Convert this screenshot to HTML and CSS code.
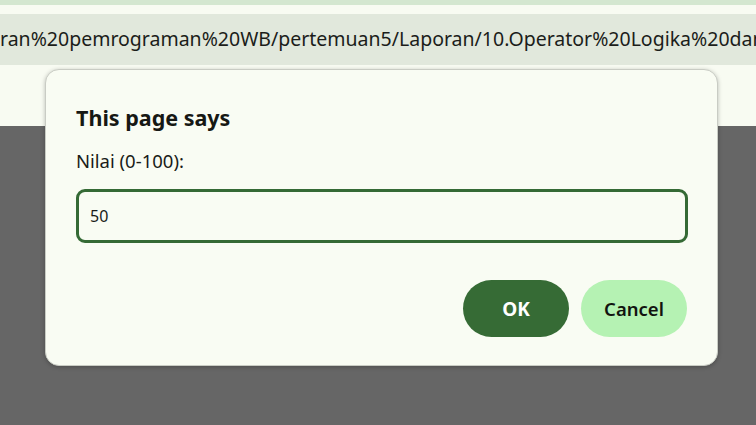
FILE: index.html
```html
<!DOCTYPE html>
<html>
<head>
<meta charset="utf-8">
<link rel="stylesheet" href="styles.css">
</head>
<body>
<div class="topband"></div>
<div class="tabstrip"></div>
<div class="addressbar">ran%20pemrograman%20WB/pertemuan5/Laporan/10.Operator%20Logika%20dan%20Percabangan/index.html</div>
<div class="toolbar"></div>
<div class="page"></div>
<div class="dialog">
  <h1 class="title">This page says</h1>
  <p class="label">Nilai (0-100):</p>
  <div class="input">50</div>
  <div class="actions">
    <div class="btn ok">OK</div>
    <div class="btn cancel">Cancel</div>
  </div>
</div>
</body>
</html>
```
FILE: styles.css
```css
html, body {
  margin: 0;
  padding: 0;
  height: 100%;
  overflow: hidden;
}
body {
  background: #666666;
  font-family: "Noto Sans", "Open Sans", sans-serif;
  color: #1a1c18;
  position: relative;
}
.topband {
  height: 5px;
  background: #d4e7d0;
}
.tabstrip {
  height: 9px;
  background: #f8fbf2;
}
.addressbar {
  height: 51px;
  background: #e1e8dc;
  font-size: 19.5px;
  line-height: 50px;
  white-space: nowrap;
  overflow: hidden;
  color: #1b1d1a;
  padding-left: 0;
}
.toolbar {
  height: 61px;
  background: #f8fbf2;
}
.page {
  height: 300px;
  background: #666666;
}
.dialog {
  position: absolute;
  left: 45px;
  top: 69px;
  width: 612px;
  height: 295px;
  background: #f9fcf3;
  border: 1px solid #c9ccc4;
  border-radius: 14px;
  box-shadow: 0 1px 4px rgba(0,0,0,0.25);
  padding: 0 29px 0 30px;
  box-sizing: content-box;
  display: flex;
  flex-direction: column;
}
.title {
  margin: 33px 0 0 0;
  font-size: 21.5px;
  font-weight: 700;
  line-height: 30px;
  color: #161814;
}
.label {
  margin: 16px 0 0 0;
  font-size: 18.5px;
  line-height: 24px;
  color: #1a1c18;
}
.input {
  margin-top: 16px;
  height: 48px;
  border: 3px solid #356a35;
  border-radius: 9px;
  padding-left: 11px;
  font-size: 16px;
  line-height: 48px;
  color: #1a1c18;
}
.actions {
  margin-top: 37px;
  display: flex;
  justify-content: flex-end;
  gap: 12px;
  padding-right: 1px;
}
.btn {
  width: 106px;
  height: 57px;
  border-radius: 29px;
  display: flex;
  align-items: center;
  justify-content: center;
  font-size: 19px;
  font-weight: 600;
}
.ok {
  background: #366b35;
  color: #ffffff;
  font-weight: 700;
}
.cancel {
  background: #b5f2b3;
  color: #121410;
  font-size: 18.5px;
}
```
